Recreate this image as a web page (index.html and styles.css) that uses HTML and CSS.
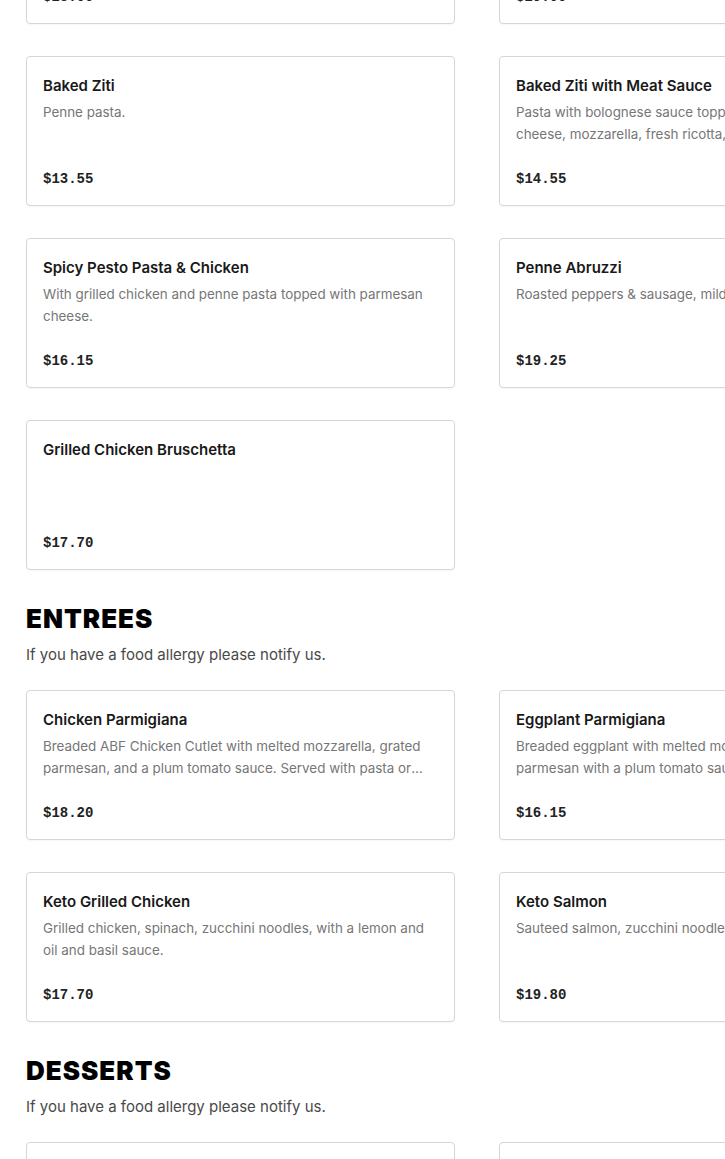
FILE: index.html
```html
<!DOCTYPE html>
<html lang="en">
<head>
<meta charset="utf-8">
<title>Menu</title>
<link rel="stylesheet" href="styles.css">
</head>
<body>
<main class="menu">
  <section class="section section-first">
    <div class="grid">
      <div class="card">
        <div class="card-title">Baked Lasagna</div>
        <div class="card-desc">Layers of pasta, ricotta, mozzarella and meat sauce.</div>
        <div class="card-price">$23.00</div>
      </div>
      <div class="card">
        <div class="card-title">Lobster Ravioli</div>
        <div class="card-desc">Served in a pink vodka sauce.</div>
        <div class="card-price">$29.00</div>
      </div>
      <div class="card">
        <div class="card-title">Baked Ziti</div>
        <div class="card-desc">Penne pasta.</div>
        <div class="card-price">$13.55</div>
      </div>
      <div class="card">
        <div class="card-title">Baked Ziti with Meat Sauce</div>
        <div class="card-desc">Pasta with bolognese sauce topped with grated parmesan cheese, mozzarella, fresh ricotta, and basil.</div>
        <div class="card-price">$14.55</div>
      </div>
      <div class="card">
        <div class="card-title">Spicy Pesto Pasta &amp; Chicken</div>
        <div class="card-desc">With grilled chicken and penne pasta topped with parmesan cheese.</div>
        <div class="card-price">$16.15</div>
      </div>
      <div class="card">
        <div class="card-title">Penne Abruzzi</div>
        <div class="card-desc">Roasted peppers &amp; sausage, mild or hot.</div>
        <div class="card-price">$19.25</div>
      </div>
      <div class="card">
        <div class="card-title">Grilled Chicken Bruschetta</div>
        <div class="card-desc"></div>
        <div class="card-price">$17.70</div>
      </div>
    </div>
  </section>

  <section class="section">
    <h2 class="section-title">ENTREES</h2>
    <p class="section-note">If you have a food allergy please notify us.</p>
    <div class="grid">
      <div class="card">
        <div class="card-title">Chicken Parmigiana</div>
        <div class="card-desc">Breaded ABF Chicken Cutlet with melted mozzarella, grated parmesan, and a plum tomato sauce. Served with pasta or salad.</div>
        <div class="card-price">$18.20</div>
      </div>
      <div class="card">
        <div class="card-title">Eggplant Parmigiana</div>
        <div class="card-desc">Breaded eggplant with melted mozzarella, ricotta, and grated parmesan with a plum tomato sauce. Served with pasta or salad.</div>
        <div class="card-price">$16.15</div>
      </div>
      <div class="card">
        <div class="card-title">Keto Grilled Chicken</div>
        <div class="card-desc">Grilled chicken, spinach, zucchini noodles, with a lemon and oil and basil sauce.</div>
        <div class="card-price">$17.70</div>
      </div>
      <div class="card">
        <div class="card-title">Keto Salmon</div>
        <div class="card-desc">Sauteed salmon, zucchini noodles, spinach.</div>
        <div class="card-price">$19.80</div>
      </div>
    </div>
  </section>

  <section class="section">
    <h2 class="section-title">DESSERTS</h2>
    <p class="section-note">If you have a food allergy please notify us.</p>
    <div class="grid">
      <div class="card">
        <div class="card-title">Tiramisu</div>
        <div class="card-desc">Classic Italian dessert.</div>
        <div class="card-price">$8.50</div>
      </div>
      <div class="card">
        <div class="card-title">Cannoli</div>
        <div class="card-desc">Filled with sweet ricotta.</div>
        <div class="card-price">$6.50</div>
      </div>
    </div>
  </section>
</main>
</body>
</html>
```

FILE: styles.css
```css
html, body {
  margin: 0;
  padding: 0;
  background: #ffffff;
  overflow: hidden;
}

body {
  font-family: Inter, "Noto Sans", "Liberation Sans", sans-serif;
  color: #191919;
}

.menu {
  padding-left: 26px;
  width: 1000px;
  margin-top: -126px;
}

.section {
  margin-bottom: 33px;
}

.section-title {
  margin: 0;
  font-family: Inter, "Liberation Sans", sans-serif;
  font-weight: 900;
  font-size: 26px;
  line-height: 32px;
  color: #000;
  letter-spacing: 1px;
}

.section-note {
  margin: 10px 0 25px;
  font-size: 15px;
  line-height: 20px;
  color: #494949;
}

.grid {
  display: grid;
  grid-template-columns: 429px 429px;
  column-gap: 44px;
  row-gap: 32px;
}

.card {
  box-sizing: border-box;
  height: 150px;
  border: 1px solid #d6d6d6;
  border-radius: 4px;
  padding: 16px 16px 15px;
  display: flex;
  flex-direction: column;
  box-shadow: 0 1px 2px rgba(0, 0, 0, 0.04);
}

.card-title {
  font-size: 15px;
  font-weight: 600;
  line-height: 25px;
  color: #191919;
  white-space: nowrap;
}

.card-desc {
  margin-top: 3px;
  font-size: 13.4px;
  line-height: 22px;
  color: #767676;
  display: -webkit-box;
  -webkit-line-clamp: 2;
  -webkit-box-orient: vertical;
  overflow: hidden;
}

.card-price {
  margin-top: auto;
  font-family: "Liberation Mono", "DejaVu Sans Mono", monospace;
  font-weight: 700;
  font-size: 14px;
  line-height: 22px;
  color: #222222;
}
```
